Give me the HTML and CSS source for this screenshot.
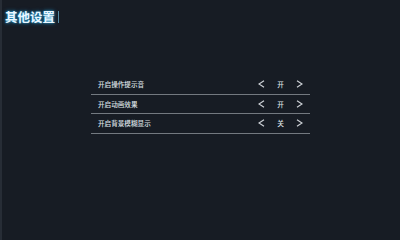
FILE: index.html
```html
<!DOCTYPE html>
<html lang="zh">
<head>
<meta charset="utf-8">
<link rel="stylesheet" href="styles.css">
</head>
<body>
<div class="screen">
  <header class="header">
    <h1 class="title">其他设置</h1>
    <span class="caret"></span>
  </header>
  <ul class="list">
    <li class="row">
      <span class="label">开启操作提示音</span>
      <span class="ctrl">
        <svg class="chev" viewBox="0 0 7 8"><polyline points="6,0.8 1,4 6,7.2"/></svg>
        <span class="value">开</span>
        <svg class="chev" viewBox="0 0 7 8"><polyline points="1,0.8 6,4 1,7.2"/></svg>
      </span>
    </li>
    <li class="row">
      <span class="label">开启动画效果</span>
      <span class="ctrl">
        <svg class="chev" viewBox="0 0 7 8"><polyline points="6,0.8 1,4 6,7.2"/></svg>
        <span class="value">开</span>
        <svg class="chev" viewBox="0 0 7 8"><polyline points="1,0.8 6,4 1,7.2"/></svg>
      </span>
    </li>
    <li class="row">
      <span class="label">开启背景模糊显示</span>
      <span class="ctrl">
        <svg class="chev" viewBox="0 0 7 8"><polyline points="6,0.8 1,4 6,7.2"/></svg>
        <span class="value">关</span>
        <svg class="chev" viewBox="0 0 7 8"><polyline points="1,0.8 6,4 1,7.2"/></svg>
      </span>
    </li>
  </ul>
</div>
</body>
</html>
```
FILE: styles.css
```css
html, body {
  margin: 0;
  padding: 0;
  background: #171c24;
}
.screen {
  width: 398px;
  height: 240px;
  border-left: 2px solid #272d36;
  background: #171c24;
  font-family: "Noto Sans CJK SC", "Noto Sans", sans-serif;
  overflow: hidden;
}
.header {
  display: flex;
  align-items: center;
  padding: 8px 0 0 3px;
  height: 17px;
}
.title {
  margin: 0;
  font-size: 12.5px;
  line-height: 17px;
  font-weight: 700;
  color: #eaf7ff;
  letter-spacing: 0;
  text-shadow: 0 0 2px #2aa8e0, 0 0 4px #1d7fb0;
}
.caret {
  width: 1px;
  height: 12px;
  margin-left: 3px;
  background: #6fb8d8;
  opacity: 0.7;
}
.list {
  list-style: none;
  margin: 50px 0 0 89px;
  padding: 0;
  width: 219px;
}
.row {
  display: flex;
  align-items: center;
  height: 18.5px;
  border-bottom: 1px solid #737980;
  padding: 0 7px;
}
.label {
  flex: 1;
  font-size: 6.6px;
  font-weight: 500;
  color: #dde1e5;
  line-height: 10px;
}
.ctrl {
  display: flex;
  align-items: center;
}
.chev {
  width: 7px;
  height: 8px;
  fill: none;
  stroke: #cfd3d8;
  stroke-width: 1.2;
}
.value {
  width: 7px;
  margin: 0 12px 0 12px;
  font-size: 6.6px;
  font-weight: 500;
  line-height: 10px;
  color: #dde1e5;
  text-align: center;
}
```
